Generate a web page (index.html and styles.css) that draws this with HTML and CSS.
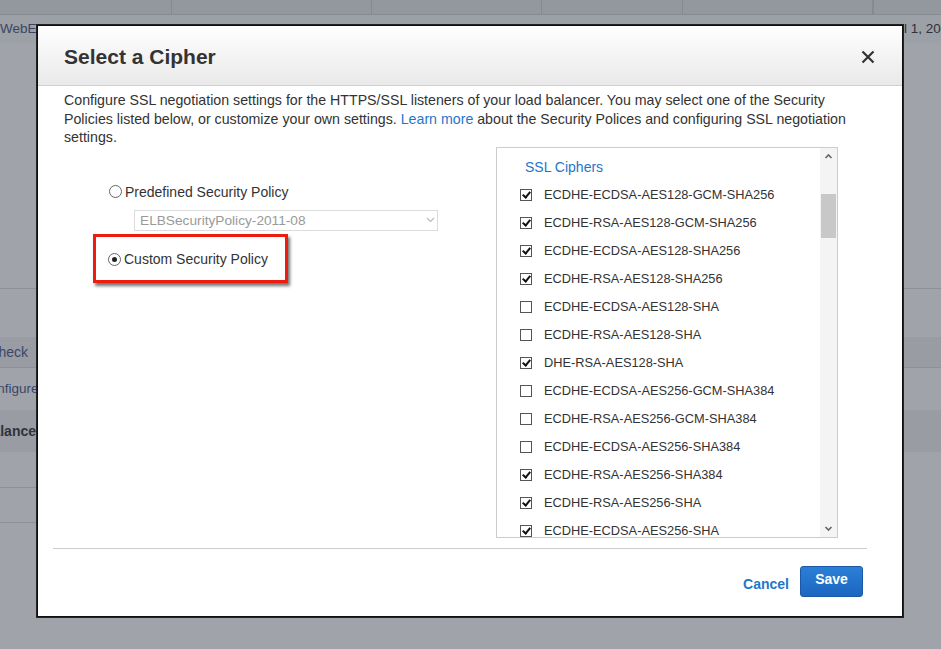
FILE: index.html
```html
<!DOCTYPE html>
<html lang="en">
<head>
  <meta charset="UTF-8">
  <title>Select a Cipher</title>
  <meta name="viewport" content="width=device-width, initial-scale=1.0">
  <link rel="stylesheet" href="styles.css">
</head>
<body>

  <!-- page behind the dialog -->
  <div class="page">
    <div class="bg-head">
      <span></span><span></span><span></span><span></span><span></span><span></span>
    </div>
    <div class="bg-row">
      <span class="bg-name">WebELB</span><span class="bg-date">April 1, 2015</span>
    </div>
    <div class="bg-gap"></div>
    <div class="bg-line"></div>
    <div class="bg-space"></div>
    <div class="bg-tab"><span class="cut">Health Check</span></div>
    <div class="bg-link"><span class="cut-2">Configure</span></div>
    <div class="bg-tab bold"><span class="cut-3">Load Balancer</span></div>
    <div class="bg-short"><div></div></div>
    <div class="bg-short b2"><div></div></div>
  </div>

  <!-- dialog -->
  <div class="dialog">
    <div class="dialog-head">
      <h2>Select a Cipher</h2>
      <svg class="close" width="14" height="14" viewBox="0 0 14 14">
        <path d="M1.5 1.5 L12.5 12.5 M12.5 1.5 L1.5 12.5" stroke="#333" stroke-width="2.2" fill="none"/>
      </svg>
    </div>

    <div class="dialog-body">
      <p class="intro">Configure SSL negotiation settings for the HTTPS/SSL listeners of your load balancer. You may select one of the Security Policies listed below, or customize your own settings. <a href="#">Learn more</a> about the Security Polices and configuring SSL negotiation settings.</p>

      <div class="columns">
        <div class="policy">
          <label class="radio-row"><span class="radio"></span>Predefined Security Policy</label>
          <div class="select">
            <span>ELBSecurityPolicy-2011-08</span>
            <svg width="9" height="6" viewBox="0 0 9 6"><path d="M1 1 L4.5 4.5 L8 1" stroke="#bbb" stroke-width="1.2" fill="none"/></svg>
          </div>
          <div class="highlight">
            <label class="radio-row"><span class="radio on"></span>Custom Security Policy</label>
          </div>
        </div>

        <div class="ciphers">
          <div class="cipher-list">
            <div class="cipher-title">SSL Ciphers</div>
            <div class="cipher"><span class="cb on"></span>ECDHE-ECDSA-AES128-GCM-SHA256</div>
            <div class="cipher"><span class="cb on"></span>ECDHE-RSA-AES128-GCM-SHA256</div>
            <div class="cipher"><span class="cb on"></span>ECDHE-ECDSA-AES128-SHA256</div>
            <div class="cipher"><span class="cb on"></span>ECDHE-RSA-AES128-SHA256</div>
            <div class="cipher"><span class="cb"></span>ECDHE-ECDSA-AES128-SHA</div>
            <div class="cipher"><span class="cb"></span>ECDHE-RSA-AES128-SHA</div>
            <div class="cipher"><span class="cb on"></span>DHE-RSA-AES128-SHA</div>
            <div class="cipher"><span class="cb"></span>ECDHE-ECDSA-AES256-GCM-SHA384</div>
            <div class="cipher"><span class="cb"></span>ECDHE-RSA-AES256-GCM-SHA384</div>
            <div class="cipher"><span class="cb"></span>ECDHE-ECDSA-AES256-SHA384</div>
            <div class="cipher"><span class="cb on"></span>ECDHE-RSA-AES256-SHA384</div>
            <div class="cipher"><span class="cb on"></span>ECDHE-RSA-AES256-SHA</div>
            <div class="cipher"><span class="cb on"></span>ECDHE-ECDSA-AES256-SHA</div>
          </div>
          <div class="scrollbar">
            <svg class="arrow" width="17" height="17" viewBox="0 0 17 17"><path d="M5.5 10 L8.5 7 L11.5 10" stroke="#666" stroke-width="1.6" fill="none"/></svg>
            <div class="track"><div class="thumb"></div></div>
            <svg class="arrow" width="17" height="17" viewBox="0 0 17 17"><path d="M5.5 7 L8.5 10 L11.5 7" stroke="#666" stroke-width="1.6" fill="none"/></svg>
          </div>
        </div>
      </div>
    </div>

    <div class="dialog-foot">
      <a href="#" class="cancel">Cancel</a>
      <button class="save">Save</button>
    </div>
  </div>

</body>
</html>
```

FILE: styles.css
```css
/* page */
body {
  margin: 0;
  font-family: 'Liberation Sans', Arial, sans-serif;
  background: #a0a3aa;
  color: #333;
  overflow: hidden;
}

.page {
  width: 941px;
  height: 649px;
  overflow: hidden;
}

/* background table */
.bg-head {
  height: 14px;
  background: #93979e;
  border-bottom: 1px solid #868a91;
  display: flex;
}

.bg-head span {
  border-right: 1px solid #858990;
}
.bg-head span:nth-child(1) { width: 171px; }
.bg-head span:nth-child(2) { width: 199px; }
.bg-head span:nth-child(3) { width: 169px; }
.bg-head span:nth-child(4) { width: 140px; }
.bg-head span:nth-child(5) { width: 189px; }

.bg-row {
  height: 28px;
  line-height: 28px;
  font-size: 13.5px;
  background: #9ca0a7;
  white-space: nowrap;
}

.bg-name {
  display: inline-block;
  width: 880px;
  color: #3b4563;
}

.bg-date {
  color: #2f3238;
}

.bg-gap {
  height: 245px;
}

.bg-line {
  height: 1px;
  background: #8c9097;
}

.bg-space {
  height: 48px;
}

.bg-tab {
  height: 30px;
  line-height: 30px;
  font-size: 14px;
  background: #999ca3;
  border-bottom: 1px solid #8c9097;
  white-space: nowrap;
  color: #3c4668;
}

.bg-tab.bold {
  height: 42px;
  line-height: 42px;
  font-weight: bold;
  color: #30333a;
  border-bottom: none;
}

.bg-link {
  height: 42px;
  line-height: 42px;
  font-size: 13.5px;
  color: #3c4668;
  white-space: nowrap;
}

.cut { margin-left: -56px; }
.cut-2 { margin-left: -20px; }
.cut-3 { margin-left: -55px; }

.bg-short {
  height: 35px;
}

.bg-short div {
  width: 300px;
  height: 100%;
  border-bottom: 1px solid #8c9097;
}

/* dialog */
.dialog {
  position: absolute;
  left: 37px;
  top: 25px;
  width: 864px;
  height: 590px;
  background: #fff;
  border: 1px solid #111;
  box-shadow: 0 0 0 1px #222;
}

.dialog-head {
  height: 60px;
  padding: 3px 26px 0;
  box-sizing: border-box;
  display: flex;
  align-items: center;
  justify-content: space-between;
  background: linear-gradient(#ffffff, #e9e9e9);
  border-bottom: 1px solid #cfcfcf;
}

.dialog-head h2 {
  margin: 0;
  font-size: 21px;
  color: #333;
}

.close {
  margin-right: 1px;
}

.dialog-body {
  padding: 5px 26px 0;
}

.intro {
  margin: 0;
  font-size: 14.2px;
  line-height: 18.5px;
  width: 790px;
  color: #333;
}

.intro a {
  color: #1f76c9;
  text-decoration: none;
}

.columns {
  display: flex;
}

/* left column */
.policy {
  width: 432px;
  padding-top: 37px;
}

.radio-row {
  display: flex;
  align-items: center;
  font-size: 14px;
  color: #333;
  margin-left: 45px;
}

.radio {
  width: 11px;
  height: 11px;
  border: 1px solid #666;
  border-radius: 50%;
  margin-right: 3px;
  position: relative;
  background: #fff;
}

.radio.on::after {
  content: '';
  position: absolute;
  left: 3px;
  top: 3px;
  width: 5px;
  height: 5px;
  border-radius: 50%;
  background: #222;
}

.select {
  margin: 10px 0 0 70px;
  width: 297px;
  height: 19px;
  border: 1px solid #dcdcdc;
  display: flex;
  align-items: center;
  justify-content: space-between;
  padding: 0 0 0 5px;
  box-sizing: content-box;
  font-size: 13.7px;
  color: #9a9a9a;
}

.select svg {
  margin-right: 2px;
}

.highlight {
  margin: 3px 0 0 29px;
  width: 189px;
  height: 41px;
  border: 3px solid #ee1c0f;
  box-shadow: 2px 3px 3px rgba(0, 0, 0, 0.55);
  display: flex;
  align-items: center;
  padding-top: 2px;
  box-sizing: content-box;
}

.highlight .radio-row {
  margin-left: 12px;
}

/* cipher panel */
.ciphers {
  width: 340px;
  height: 389px;
  border: 1px solid #cccccc;
  display: flex;
}

.cipher-list {
  flex: 1;
  overflow: hidden;
  padding: 9px 0 0 23px;
}

.cipher-title {
  font-size: 14px;
  color: #1f76c9;
  margin-left: 5px;
  height: 24px;
  line-height: 20px;
}

.cipher {
  height: 28px;
  display: flex;
  align-items: center;
  font-size: 12.8px;
  color: #333;
}

.cb {
  width: 10px;
  height: 10px;
  border: 1px solid #555;
  margin-right: 12px;
  position: relative;
  background: #fff;
}

.cb.on::after {
  content: '';
  position: absolute;
  left: 3px;
  top: 0px;
  width: 3px;
  height: 6px;
  border: solid #111;
  border-width: 0 2px 2px 0;
  transform: rotate(40deg);
}

.scrollbar {
  width: 17px;
  background: #f4f4f4;
  display: flex;
  flex-direction: column;
}

.arrow {
  flex: none;
}

.track {
  flex: 1;
  padding-top: 29px;
}

.thumb {
  height: 44px;
  background: #c8c8c8;
  margin: 0 1px;
}

/* footer */
.dialog-foot {
  margin: 10px 35px 0 15px;
  border-top: 1px solid #cccccc;
  display: flex;
  justify-content: flex-end;
  align-items: center;
  padding-top: 17px;
}

.cancel {
  font-size: 14px;
  font-weight: bold;
  color: #1f76c9;
  text-decoration: none;
  margin-right: 11px;
  margin-top: 6px;
}

.save {
  width: 63px;
  height: 31px;
  margin-right: 4px;
  font-family: 'Liberation Sans', Arial, sans-serif;
  font-size: 14px;
  font-weight: bold;
  color: #fff;
  background: linear-gradient(#2b7fd6, #1c66c0);
  border: 1px solid #1a58a8;
  border-radius: 3px;
  padding: 0 0 4px;
}
```
